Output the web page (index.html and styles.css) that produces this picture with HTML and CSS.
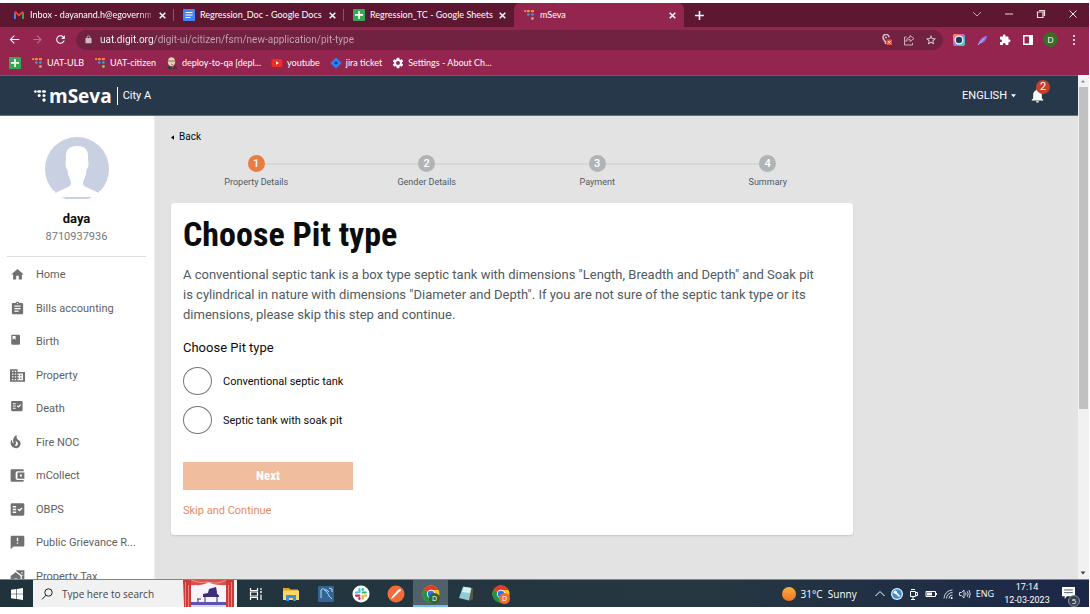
FILE: index.html
```html
<!DOCTYPE html>
<html lang="en">
<head>
<meta charset="utf-8">
<meta name="viewport" content="width=device-width, initial-scale=1">
<title>mSeva</title>
<link rel="stylesheet" href="styles.css">
</head>
<body>
<svg class="defs" aria-hidden="true">
  <symbol id="digit" viewBox="0 0 12 14"><g class="d-top"><circle cx="1.4" cy="2.6" r="1.3"/><rect x="3.2" y="1.2" width="4" height="2.6" rx="1.2"/><rect x="8" y="1.2" width="4" height="2.6" rx="1.2"/></g><g class="d-mid"><circle cx="5.2" cy="6.4" r="1.5"/><circle cx="10" cy="6.4" r="1.5"/></g><circle class="d-low" cx="10" cy="11" r="1.7"/></symbol>
  <symbol id="sheet" viewBox="0 0 12 12"><rect width="12" height="12" rx="1" fill="#34a853"/><path d="M5.2 2v3H2v1.7h3.2V10h1.7V6.700H10V5H6.900V2z" fill="#fff"/></symbol>
  <symbol id="close" viewBox="0 0 8 8"><path d="M1.500 1.500l5 5m0-5l-5 5" stroke="currentColor" stroke-width="1.300"/></symbol>
  <symbol id="check" viewBox="0 0 24 24"><path d="M20 3H4c-1.100 0-2 .9-2 2v14c0 1.100.9 2 2 2h16c1.100 0 2-.9 2-2V5c0-1.100-.9-2-2-2zM10 17H5v-2h5v2zm0-4H5v-2h5v2zm0-4H5V7h5v2zm4.820 6L12 12.160l1.410-1.410 1.410 1.420L17.990 9l1.420 1.420L14.820 15z"/></symbol>
  <symbol id="chrome" viewBox="0 0 18 18"><circle cx="9" cy="9" r="8.500" fill="#fbc116"/><path d="M9 9L1.600 4.700A8.500 8.500 0 0 1 16.400 5H9z" fill="#e33b2e"/><path d="M9 9L1.600 4.700A8.500 8.500 0 0 0 8.600 17.500L12.500 11z" fill="#229342"/><circle cx="9" cy="9" r="4.200" fill="#fff"/><circle cx="9" cy="9" r="3.300" fill="#2a74e8"/></symbol>
</svg>
<div class="desktop">
  <header class="browser">
    <div class="tabs">
      <div class="tab"><svg class="fav" viewBox="0 0 12 12"><path d="M1 10V3l2 1.500V10z" fill="#4285f4"/><path d="M11 10V3L9 4.500V10z" fill="#34a853"/><path d="M1 3.200L2.500 2 6 5l3.500-3L11 3.200 6 7.500z" fill="#ea4335"/></svg><span class="tab-title fade">Inbox - dayanand.h@egovernme</span><button class="x" aria-label="Close tab"><svg viewBox="0 0 8 8"><use href="#close"/></svg></button></div>
      <div class="tab"><svg class="fav" viewBox="0 0 12 12"><rect width="12" height="12" rx="1" fill="#4285f4"/><path d="M2.500 3.500h7M2.500 6h7M2.500 8.500h5" stroke="#fff" stroke-width="1.200"/></svg><span class="tab-title">Regression_Doc - Google Docs</span><button class="x" aria-label="Close tab"><svg viewBox="0 0 8 8"><use href="#close"/></svg></button></div>
      <div class="tab"><svg class="fav"><use href="#sheet"/></svg><span class="tab-title">Regression_TC - Google Sheets</span><button class="x" aria-label="Close tab"><svg viewBox="0 0 8 8"><use href="#close"/></svg></button></div>
      <div class="tab active"><svg class="fav color"><use href="#digit"/></svg><span class="tab-title">mSeva</span><button class="x" aria-label="Close tab"><svg viewBox="0 0 8 8"><use href="#close"/></svg></button></div>
      <button class="plus" aria-label="New tab"><svg viewBox="0 0 10 10"><path d="M5 1v8M1 5h8" stroke="#fff" stroke-width="1.500"/></svg></button>
      <div class="win">
        <button aria-label="Search tabs"><svg viewBox="0 0 10 10"><path d="M1 3l4 4 4-4" fill="none" stroke="#c8a3af"/></svg></button>
        <button aria-label="Minimize"><svg viewBox="0 0 10 10"><path d="M1 5h8" stroke="#f0d8c4"/></svg></button>
        <button aria-label="Restore"><svg viewBox="0 0 10 10"><path d="M1.500 3h5.500v5.500H1.500zM3 1.500h5.500V7" fill="none" stroke="#f0e0dd" stroke-width="1.200"/></svg></button>
        <button aria-label="Close"><svg viewBox="0 0 10 10"><path d="M1.500 1.500l7 7m0-7l-7 7" stroke="#f0e4e8"/></svg></button>
      </div>
    </div>
    <div class="toolbar">
      <button class="tool" aria-label="Back"><svg viewBox="0 0 24 24"><path d="M21 11H6.830l5.590-5.590L11 4l-8 8 8 8 1.410-1.410L6.830 13H21z"/></svg></button>
      <button class="tool dim" aria-label="Forward"><svg viewBox="0 0 24 24"><path d="M4 11h12.170l-5.590-5.590L12 4l8 8-8 8-1.410-1.410L16.170 13H4z"/></svg></button>
      <button class="tool" aria-label="Reload"><svg viewBox="0 0 24 24"><path d="M17.650 6.350C16.200 4.900 14.210 4 12 4c-4.420 0-7.990 3.580-7.990 8s3.570 8 7.990 8c3.730 0 6.840-2.550 7.730-6h-2.080c-.82 2.330-3.040 4-5.650 4-3.310 0-6-2.690-6-6s2.690-6 6-6c1.660 0 3.140.69 4.220 1.780L13 11h7V4l-2.350 2.350z"/></svg></button>
      <div class="omnibox">
        <svg class="lock" viewBox="0 0 24 24"><path d="M18 8h-1V6c0-2.760-2.240-5-5-5S7 3.240 7 6v2H4v14h16V8zM9 8V6c0-1.660 1.340-3 3-3s3 1.340 3 3v2z"/></svg>
        <input class="url" aria-label="Address" value="uat.digit.org/digit-ui/citizen/fsm/new-application/pit-type">
        <button aria-label="Location blocked"><svg viewBox="0 0 12 12"><path d="M4 7.500L2.500 5a3 3 0 1 1 5.500-1.500M4.500 7v3" fill="none" stroke="#d9c0ca" stroke-width="1.500"/><circle cx="5" cy="3.500" r="1" fill="#d9c0ca"/><rect x="5.500" y="5.500" width="5.500" height="5.500" fill="#e8503c"/><path d="M7 7l2.500 2.500m0-2.500L7 9.500" stroke="#fff" stroke-width=".9"/></svg></button>
        <button aria-label="Share"><svg viewBox="0 0 12 12"><path d="M3.500 3H1.500v8h8V9M7 1.500l4 3-4 3v-2c-2 0-3 .7-4 2 .2-2.500 1.700-4 4-4z" fill="none" stroke="#cfaebb"/></svg></button>
        <button aria-label="Bookmark"><svg viewBox="0 0 24 24"><path fill="#ead9e0" d="M22 9.240l-7.190-.62L12 2 9.190 8.630 2 9.240l5.460 4.730L5.820 21 12 17.270 18.180 21l-1.630-7.030L22 9.240zM12 15.400l-3.760 2.270 1-4.280-3.320-2.880 4.380-.38L12 6.100l1.710 4.040 4.380.38-3.320 2.880 1 4.280L12 15.400z"/></svg></button>
      </div>
      <div class="exts">
        <button aria-label="Camera extension"><svg viewBox="0 0 12 12"><defs><linearGradient id="rb" x2="1" y2="1"><stop stop-color="#fa4"/><stop offset=".35" stop-color="#e5a"/><stop offset=".65" stop-color="#4af"/><stop offset="1" stop-color="#5d8"/></linearGradient></defs><rect width="12" height="12" rx="2" fill="url(#rb)"/><circle cx="6" cy="6" r="4.500" fill="#fff"/><circle cx="6" cy="6" r="3.200" fill="#263b52"/></svg></button>
        <button aria-label="Feather extension"><svg viewBox="0 0 12 12"><path d="M2 11C3 6 6 3 11 1.500 10.500 6 8 9 3.500 9.500z" fill="#8d76dc"/><path d="M2 11l6-6.500" stroke="#ddd3ff" stroke-width=".7"/></svg></button>
        <button aria-label="Extensions"><svg viewBox="0 0 24 24"><path fill="#fff" d="M20.500 11H19V7c0-1.100-.9-2-2-2h-4V3.500C13 2.120 11.880 1 10.500 1S8 2.120 8 3.500V5H4c-1.100 0-1.990.9-1.990 2v3.800H3.500c1.490 0 2.700 1.210 2.700 2.700s-1.210 2.700-2.700 2.700H2V20c0 1.100.9 2 2 2h3.800v-1.500c0-1.490 1.210-2.700 2.700-2.700 1.490 0 2.700 1.210 2.700 2.700V22H17c1.100 0 2-.9 2-2v-4h1.500c1.380 0 2.500-1.120 2.500-2.500S21.880 11 20.500 11z"/></svg></button>
        <button aria-label="Side panel"><svg viewBox="0 0 12 12"><path d="M1 1h10v10H1zM2.500 2.500v7H7v-7z" fill="#fff" fill-rule="evenodd"/></svg></button>
        <button class="profile" aria-label="Profile">D</button>
        <button class="kebab" aria-label="Menu"><svg viewBox="0 0 12 12"><g fill="#fff"><circle cx="6" cy="2" r="1"/><circle cx="6" cy="6" r="1"/><circle cx="6" cy="10" r="1"/></g></svg></button>
      </div>
    </div>
    <nav class="bookmarks" aria-label="Bookmarks">
      <a href="#" aria-label="Sheets"><svg><use href="#sheet"/></svg></a>
      <a href="#"><svg class="color"><use href="#digit"/></svg>UAT-ULB</a>
      <a href="#"><svg class="color"><use href="#digit"/></svg>UAT-citizen</a>
      <a href="#"><svg viewBox="0 0 12 12"><path d="M1.500 12c0-3 2-4 5-4s4.500 1.500 4.500 4z" fill="#333b45"/><ellipse cx="5.500" cy="4.800" rx="3.700" ry="4.600" fill="#e9d3b4"/><path d="M2 4h7M5 7l2 1" stroke="#6e5541" stroke-width=".8"/><path d="M5 9l2 3 1-3z" fill="#c33"/></svg>deploy-to-qa [depl...</a>
      <a href="#"><svg viewBox="0 0 12 12"><rect x=".5" y="2" width="11" height="8" rx="2" fill="#f22b22"/><path d="M5 4.200v3.600L8 6z" fill="#fff"/></svg>youtube</a>
      <a href="#"><svg viewBox="0 0 12 12"><path d="M6 .5L11.500 6 6 11.500.5 6z" fill="#2684ff"/><path d="M6 4l2 2-2 2-2-2z" fill="#123f8f"/></svg>jira ticket</a>
      <a href="#"><svg viewBox="1 1 22 22"><path fill="#fff" d="M19.140 12.940c.04-.3.06-.61.06-.94 0-.32-.02-.64-.07-.94l2.030-1.580c.18-.14.23-.41.12-.61l-1.920-3.320c-.12-.22-.37-.29-.59-.22l-2.390.96c-.5-.38-1.030-.7-1.620-.94l-.36-2.540c-.04-.24-.24-.41-.48-.41h-3.840c-.24 0-.43.17-.47.41l-.36 2.540c-.59.24-1.130.57-1.620.94l-2.390-.96c-.22-.08-.47 0-.59.22L2.740 8.870c-.12.21-.08.47.12.61l2.030 1.580c-.05.3-.09.63-.09.94s.02.64.07.94l-2.030 1.580c-.18.14-.23.41-.12.61l1.920 3.320c.12.22.37.29.59.22l2.390-.96c.5.38 1.030.7 1.620.94l.36 2.540c.05.24.24.41.48.41h3.840c.24 0 .44-.17.47-.41l.36-2.540c.59-.24 1.130-.56 1.620-.94l2.390.96c.22.08.47 0 .59-.22l1.920-3.320c.12-.22.07-.47-.12-.61l-2.010-1.580zM12 15.600a3.600 3.600 0 1 1 0-7.200 3.600 3.600 0 0 1 0 7.200z"/></svg>Settings - About Ch...</a>
    </nav>
  </header>

  <div class="viewport">
    <div class="app">
      <header class="appbar">
        <div class="brand"><svg viewBox="0 0 12 14"><use href="#digit"/></svg><span class="wordmark">mSeva</span></div>
        <span class="city">City A</span>
        <button class="lang">ENGLISH<svg viewBox="0 0 6 4"><path d="M0 0h6L3 3.500z" fill="#fff"/></svg></button>
        <button class="bell" aria-label="Notifications"><svg viewBox="3 2 18 20"><path fill="#fff" d="M12 22c1.100 0 2-.9 2-2h-4c0 1.100.89 2 2 2zm6-6v-5c0-3.070-1.640-5.640-4.500-6.320V4c0-.83-.67-1.500-1.500-1.500s-1.500.67-1.500 1.500v.68C7.630 5.360 6 7.920 6 11v5l-2 2v1h16v-1l-2-2z"/></svg><span class="badge">2</span></button>
      </header>
      <div class="content">
        <aside class="sidebar">
          <div class="user">
            <svg class="avatar" viewBox="0 0 64 62"><circle cx="32" cy="32" r="32" fill="#c9d0e2"/><path d="M8 57l16-7.500c2-1 2.500-3 1.500-6-2-3.500-2.500-6-3-10.500-2-2-2.500-7-1.500-10C20 14 23 9 32 9s12 5 11 14c1 3 .5 8-1.500 10-.5 4.500-1 7-3 10.500-1 3-.5 5 1.500 6L56 57v3H8z" fill="#fff"/><path d="M0 54h10v6H0zM54 54h10v6H54z" fill="#fff"/></svg>
            <strong>daya</strong>
            <span>8710937936</span>
          </div>
          <nav class="menu" aria-label="Services">
            <a href="#"><svg viewBox="0 0 24 24"><path d="M10 20v-6h4v6h5v-8h3L12 3 2 12h3v8z"/></svg>Home</a>
            <a href="#"><svg viewBox="1 0 22 24"><path d="M19 3h-4.180C14.400 1.840 13.300 1 12 1c-1.300 0-2.400.84-2.820 2H5c-1.100 0-2 .9-2 2v14c0 1.100.9 2 2 2h14c1.100 0 2-.9 2-2V5c0-1.100-.9-2-2-2zm-7 0c.55 0 1 .45 1 1s-.45 1-1 1-1-.45-1-1 .45-1 1-1zm2 14H7v-2h7v2zm3-4H7v-2h10v2zm0-4H7V7h10v2z"/></svg>Bills accounting</a>
            <a href="#"><svg viewBox="0 0 24 24"><path d="M4 1h10q2 0 2 2v12q0 2-2 2H4q-2 0-2-2V3q0-2 2-2zm0 2v6l2.500-2L9 9V3z" fill-rule="evenodd"/></svg>Birth</a>
            <a href="#"><svg viewBox="1 1 22 22"><path d="M12 7V3H1v18h22V7H12zM6 19H4v-2h2v2zm0-4H4v-2h2v2zm0-4H4V9h2v2zm0-4H4V5h2v2zm4 12H8v-2h2v2zm0-4H8v-2h2v2zm0-4H8V9h2v2zm0-4H8V5h2v2zm10 12h-8v-2h2v-2h-2v-2h2v-2h-2V9h8v10zm-2-8h-2v2h2v-2zm0 4h-2v2h2v-2z"/></svg>Property</a>
            <a href="#"><svg viewBox="0 0 24 24"><use href="#check" x="0" y="-3" width="22" height="22"/></svg>Death</a>
            <a href="#"><svg viewBox="3 1 24 24"><path d="M19.480 12.350c-1.570-4.080-7.160-4.300-5.810-10.230.1-.44-.37-.78-.75-.55C9.290 3.710 6.680 8 8.870 13.620c.18.46-.36.89-.75.59-1.810-1.370-2-3.340-1.840-4.750.06-.52-.62-.77-.91-.34C4.690 10.160 4 11.840 4 14.370c.38 5.600 5.110 7.320 6.810 7.540 2.430.31 5.060-.14 6.950-1.870 2.080-1.930 2.840-5.010 1.720-7.690zm-9.280 5.030c1.440-.35 2.180-1.390 2.380-2.310.33-1.430-.96-2.830-.09-5.090.33 1.870 3.270 3.040 3.270 5.080.08 2.530-2.660 4.700-5.560 2.320z"/></svg>Fire NOC</a>
            <a href="#"><svg viewBox="0 0 24 24"><path d="M22 19v1q0 2-2 2H3q-2 0-2-2V4q0-2 2-2h17q2 0 2 2v1H12q-3 0-3 3v8q0 3 3 3zM12 17h11V7H12zm4-3.500v-3h3v3z" fill-rule="evenodd"/></svg>mCollect</a>
            <a href="#"><svg viewBox="1 2 22 20"><use href="#check" x="0" y="0" width="24" height="24"/></svg>OBPS</a>
            <a href="#"><svg viewBox="1 1 22 22"><path d="M20 2H4c-1.100 0-1.990.9-1.990 2L2 22l4-4h14c1.100 0 2-.9 2-2V4c0-1.100-.9-2-2-2zm-7 12h-2v-2h2v2zm0-4h-2V5h2v5z"/></svg>Public Grievance R...</a>
            <a href="#"><svg viewBox="0 0 24 24"><path d="M1 11l8-6 8 6v11h-5v-7H7v7H1zM10 2h13v20h-4V10l-9-6.500z"/><path d="M18 5h2v2h-2zM20 9h1v2h-1z" fill="#fff"/></svg>Property Tax</a>
          </nav>
        </aside>
        <main class="main">
          <a class="back" href="#"><svg viewBox="0 0 4 6"><path d="M4 0v6L0 3z"/></svg>Back</a>
          <ol class="steps">
            <li class="current"><b>1</b><span>Property Details</span></li>
            <li><b>2</b><span>Gender Details</span></li>
            <li><b>3</b><span>Payment</span></li>
            <li><b>4</b><span>Summary</span></li>
          </ol>
          <form class="card">
            <h1>Choose Pit type</h1>
            <p>A conventional septic tank is a box type septic tank with dimensions "Length, Breadth and Depth" and Soak pit is cylindrical in nature with dimensions "Diameter and Depth". If you are not sure of the septic tank type or its dimensions, please skip this step and continue.</p>
            <fieldset>
              <legend>Choose Pit type</legend>
              <label><input type="radio" name="pit">Conventional septic tank</label>
              <label><input type="radio" name="pit">Septic tank with soak pit</label>
            </fieldset>
            <button type="button" class="next">Next</button>
            <a class="skip" href="#">Skip and Continue</a>
          </form>
        </main>
      </div>
    </div>
    <div class="scroll" aria-hidden="true">
      <svg viewBox="0 0 10 12"><path d="M3 7.500h4L5 5z" fill="#8a8a8a"/></svg>
      <div class="track"><div class="thumb"></div></div>
      <svg viewBox="0 0 10 12"><path d="M2.500 4.500h5L5 7.500z" fill="#444"/></svg>
    </div>
  </div>

  <footer class="taskbar">
    <button class="start" aria-label="Start"><svg viewBox="0 0 12 12"><path d="M0 1.800L5.400 1v4.700H0zM6 .9L12 0v5.700H6zM0 6.300h5.400V11L0 10.200zM6 6.300h6V12l-6-.9z" fill="#fff"/></svg></button>
    <label class="search"><svg class="glass" viewBox="0 0 12 12"><circle cx="7.500" cy="4.500" r="3.700" fill="none" stroke="#222"/><path d="M5 7.200L1 11.400" stroke="#222"/></svg><input type="text" aria-label="Search" placeholder="Type here to search">
      <svg class="art" viewBox="0 0 51 27"><path d="M0 0h51v27H0z" fill="#f7f3fb"/><path d="M6 22h39v5H6z" fill="#5b55ad"/><path d="M6 25h39v2H6z" fill="#d9d4ef"/><path d="M20 14l5-1 1-4 7-2 1 5c-1 3 3 2 2 5H20z" fill="#3b2f78"/><path d="M22 16v6M34 16v6M14 19h4M15 19v3" stroke="#3b2f78"/><path d="M0 0h51v3Q44 6 38 5 30 5 25.500 2 20 6 13 5 8 6 0 4z" fill="#d8504a"/><path d="M8 0q9 4 17 2M43 0q-8 5-17 2" stroke="#f4958c" fill="none"/><path d="M0 0h8v27H1zM43 0h8v27h-8z" fill="#c93c3a"/><path d="M2.500 2v25M5.500 5v22M45.500 5v22M48.500 2v25" stroke="#ee8078"/></svg></label>
    <div class="apps">
      <button aria-label="Task view"><svg viewBox="0 0 18 18"><path d="M3.500 3v2.500h7V3M3.500 15v-2.500h7V15M3.500 7h7v4h-7zM14 3v2M14 9.500V15" fill="none" stroke="#fff" stroke-width="1.200"/><circle cx="14" cy="7" r="1" fill="#fff"/></svg></button>
      <button aria-label="File Explorer"><svg viewBox="0 0 18 18"><path d="M1 3h6l1.500 1.500H16V14H1z" fill="#e8a21f"/><path d="M1 5.500h16V15H1z" fill="#fbd764"/><path d="M4 16v-6h10v6h-3v-3H7v3z" fill="#3f8ddb"/></svg></button>
      <button aria-label="MySQL Workbench"><svg viewBox="0 0 18 18"><rect x="1" y="1" width="16" height="16" rx="1" fill="#326596"/><path d="M4 13V5q2-3 5 1t3 5l3 3M7 5q3-1 5 2M12 3l3 1v3" fill="none" stroke="#b8d9eb"/></svg></button>
      <button aria-label="Slack"><svg viewBox="0 0 18 18"><circle cx="9" cy="9" r="8.500" fill="#fff"/><g stroke-width="2.200" stroke-linecap="round"><path d="M7.500 4v3M4 7.500h1.500" stroke="#36c5f0"/><path d="M10.700 7.500h3M10.700 4v1" stroke="#2eb67d"/><path d="M10.700 10.700v3M13 10.700h1" stroke="#ecb22e"/><path d="M4 10.700h3.400M7.400 13v1" stroke="#e01e5a"/></g></svg></button>
      <button aria-label="Postman"><svg viewBox="0 0 18 18"><circle cx="9" cy="9" r="8.500" fill="#f26b3a"/><path d="M4 14l1.500-3 6-6.500Q14 3.500 14 5T12 7l-6 6z" fill="#fff"/></svg></button>
      <button class="running" aria-label="Chrome, D"><svg viewBox="0 0 18 18"><use href="#chrome"/></svg><span class="tag">D</span></button>
      <button aria-label="Notepad"><svg viewBox="0 0 18 18"><path d="M6 2l10 1v11l-3 2z" fill="#5c5443"/><path d="M6 1.500l8.500 1.500L12 15.500 2 13z" fill="#8fcbd6"/><path d="M7 2l7 1-1 5-8-1z" fill="#d8f0f1"/></svg></button>
      <button aria-label="Chrome, second profile"><svg viewBox="0 0 18 18"><use href="#chrome"/></svg><span class="tag orange">D</span></button>
    </div>
    <div class="tray">
      <span class="sun"></span><span class="weather">31°C&nbsp; Sunny</span>
      <svg viewBox="0 0 12 12"><path d="M1.500 8L6 3.500 10.500 8" fill="none" stroke="#fff"/></svg>
      <svg viewBox="0 0 12 12"><circle cx="6" cy="6" r="6" fill="#e8f3fb"/><circle cx="6" cy="6" r="4.800" fill="#3b8fd6"/><path d="M4 3.800l4.500 4.700" stroke="#fff" stroke-width="1.800"/><circle cx="4.300" cy="4.200" r="1.700" fill="#fff"/></svg>
      <svg viewBox="0 0 12 12"><path d="M2.500 3.500h5v5h-5zM3 1.500h4M5 8.500v3M3 11.500h4M7.500 4.500h2v3h-2" fill="none" stroke="#fff"/></svg>
      <svg viewBox="0 0 12 12"><path d="M1 3.500h9.500v5H1zM11.500 5v2" fill="none" stroke="#fff"/><path d="M2 4.500h5v3H2z" fill="#fff"/></svg>
      <svg viewBox="0 0 12 12"><path d="M2 10.500A8.500 8.500 0 0 1 10.500 2M4.500 10.500a6 6 0 0 1 6-6M7 10.500A3.500 3.500 0 0 1 10.500 7" fill="none" stroke="#ccd3dc"/><circle cx="9.700" cy="10" r="1" fill="#fff"/></svg>
      <svg viewBox="0 0 12 12"><path d="M.5 4.500h2L5 2v8L2.500 7.500h-2zM6.500 4.500q1 1.500 0 3M8.200 3.200q2 2.800 0 5.600M10 2q2.500 4 0 8" fill="none" stroke="#e2e6ec" stroke-width=".9"/></svg>
      <span class="eng">ENG</span>
      <time class="clock"><span>17:14</span><span>12-03-2023</span></time>
      <button class="notes" aria-label="Notifications"><svg viewBox="0 0 12 12"><path d="M0 0h12v8.500H4.500L2.500 11V8.500H0z" fill="#fff"/><path d="M2 2.700h8M2 5.200h8" stroke="#39465a" stroke-width=".8"/></svg><span class="count">5</span></button>
    </div>
  </footer>
</div>
</body>
</html>
```
FILE: styles.css
```css
* { box-sizing: border-box; }
body { margin: 0; background: #fff; font-family: Roboto, "Liberation Sans", sans-serif; }
a { color: inherit; text-decoration: none; }
button { border: 0; padding: 0; background: none; color: inherit; font: inherit; display: flex; align-items: center; justify-content: center; position: relative; }
svg { display: block; flex: none; }
.defs { display: none; }
.d-top { fill: var(--top, #fff); }
.d-mid { fill: var(--mid, #fff); }
.d-low { fill: var(--low, #fff); }
.color { --top: #f08a3c; --mid: #3e9be0; --low: #8bc34a; }

.desktop { display: flex; flex-direction: column; height: 100vh; padding: 3px 1px 7px 0; overflow: hidden; }

/* browser chrome */
.browser { font: 9px/12px Lato, "Open Sans", sans-serif; color: #fff; background: #94254e; flex: none; }
.tabs { display: flex; height: 24px; background: #5d1731; padding-left: 4px; }
.tab { display: flex; align-items: center; width: 170px; gap: 5px; padding: 0 6px 0 9px; position: relative; }
.tab:nth-child(-n+2)::after { content: ""; position: absolute; right: 0; top: 6px; width: 1px; height: 12px; background: #94536a; }
.tab.active { background: #94254e; border-radius: 6px 6px 0 0; }
.fav { width: 12px; height: 12px; }
.tab-title { flex: 1; min-width: 0; white-space: nowrap; }
.fade { mask-image: linear-gradient(90deg, #000 88%, #0006); }
.x { width: 12px; height: 12px; }
.x svg { width: 9px; height: 9px; }
.plus { width: 30px; }
.plus svg { width: 11px; height: 11px; }
.win { display: flex; margin-left: auto; }
.win button { width: 32px; height: 22px; }
.win svg { width: 10px; height: 10px; }

.toolbar { display: flex; align-items: center; height: 25px; padding: 0 4px 0 3px; }
.tool { width: 23px; height: 20px; fill: #fff; }
.tool svg { width: 13px; height: 13px; }
.dim { fill: #b9718b; }
.omnibox { display: flex; align-items: center; flex: 1; height: 20px; margin-left: 4px; border-radius: 10px; background: #712240; padding: 0 1px 0 8px; }
.omnibox button { width: 22px; height: 20px; }
.omnibox button svg { width: 12px; height: 12px; }
.lock { width: 9px; height: 9px; fill: #d3b7c2; margin-right: 7px; }
.url { flex: 1; min-width: 0; border: 0; padding: 0; outline: 0; font: 10px/14px Roboto, sans-serif; color: transparent; background: linear-gradient(90deg, #fff 54px, #c9a5b3 54px); background-clip: text; -webkit-background-clip: text; }
.exts { display: flex; align-items: center; margin-left: 4px; }
.exts button { width: 23px; height: 20px; }
.exts svg { width: 12px; height: 12px; }
.exts .profile { width: 15px; height: 15px; border-radius: 50%; background: #3c6a28; font-size: 8px; margin: 0 4px; }

.bookmarks { display: flex; align-items: center; gap: 10px; height: 23px; padding: 0 0 2px 9px; }
.bookmarks a { display: flex; align-items: center; gap: 4px; }
.bookmarks svg { width: 12px; height: 12px; }

/* page */
.viewport { display: flex; flex: 1; min-height: 0; }
.app { display: flex; flex-direction: column; flex: 1; min-width: 0; }
.appbar { display: flex; align-items: center; height: 41px; flex: none; padding: 0 34px; background: #28384b; color: #fff; border-top: 1px solid #62606e; border-bottom: 1px solid #657180; }
.brand { display: flex; align-items: center; gap: 3px; padding-right: 5px; border-right: 1px solid #fff; height: 18px; }
.brand svg { width: 12px; height: 14px; }
.wordmark { font: 700 19px/18px "Open Sans", sans-serif; }
.city { font-size: 11px; margin-left: 5px; }
.lang { margin-left: auto; font-size: 11px; gap: 4px; }
.lang svg { width: 5px; height: 4px; }
.bell { width: 14px; height: 16px; margin-left: 14px; }
.bell svg { width: 13px; height: 15px; }
.badge { position: absolute; left: 6px; top: -8px; width: 14px; height: 14px; border-radius: 50%; background: #c8402c; font-size: 11px; line-height: 14px; }

.content { display: flex; flex: 1; min-height: 0; background: #e3e3e3; }
.sidebar { width: 155px; flex: none; background: #fff; overflow: hidden; border-right: 1px solid #eee; }
.user { display: flex; flex-direction: column; align-items: center; margin: 0 8px 0 7px; padding-top: 21px; height: 141px; border-bottom: 1px solid #ddd; font-size: 11px; line-height: 18px; color: #77787a; }
.user strong { font-size: 13px; color: #0b0c0c; margin-top: 11px; }
.avatar { width: 64px; height: 62px; }
.menu { display: grid; grid-template-rows: repeat(10, 1fr); height: 336px; padding-top: 1px; font-size: 11px; color: #5f6062; }
.menu a { display: flex; align-items: center; gap: 11px; padding-left: 10px; }
.menu svg { width: 15px; height: 15px; fill: #6f7072; }

.main { flex: 1; min-width: 0; padding: 14px 16px 0; }
.back { display: flex; align-items: center; gap: 5px; font-size: 10px; line-height: 14px; color: #0b0c0c; }
.back svg { width: 3px; height: 5px; }
.steps { display: grid; grid-template-columns: repeat(4, 1fr); max-width: 682px; margin: 11px 0 14px; padding: 0; list-style: none; }
.steps li { display: flex; flex-direction: column; align-items: center; gap: 3px; font-size: 9px; line-height: 14px; color: #505a5f; position: relative; }
.steps b { width: 17px; height: 17px; border-radius: 50%; background: #b1b4b6; color: #fff; font-size: 11px; line-height: 17px; text-align: center; font-weight: 500; z-index: 1; }
.steps .current b { background: #e87c42; }
.steps li + li::before { content: ""; position: absolute; top: 8px; right: 50%; width: 100%; height: 2px; background: #d6d7d7; }
.card { max-width: 682px; min-height: 332px; background: #fff; border-radius: 3px; padding: 10px 12px; box-shadow: 0 1px 2px #0002; }
h1 { margin: 0 0 10px; font: 700 34px/42px "Roboto Condensed", "Liberation Sans Narrow", sans-serif; color: #0b0c0c; }
.card p { margin: 0 0 13px; padding-right: 20px; font-size: 13px; line-height: 20px; color: #505a5f; }
fieldset { border: 0; margin: 0; padding: 0; }
legend { padding: 0; font-size: 13px; line-height: 20px; color: #0b0c0c; margin-bottom: 9px; }
fieldset label { display: flex; align-items: center; gap: 11px; font-size: 11px; color: #0b0c0c; margin-bottom: 11px; }
fieldset input { appearance: none; width: 29px; height: 28px; margin: 0; border: 1px solid #777; border-radius: 50%; }
.next { width: 170px; height: 28px; margin-top: 17px; background: #f0bd9f; color: #fff; font: 700 13px/28px "Roboto Condensed", "Liberation Sans Narrow", sans-serif; }
.skip { display: block; width: max-content; margin-top: 13px; font-size: 11px; line-height: 16px; color: #e88b5c; }

.scroll { display: flex; flex-direction: column; width: 11px; flex: none; background: #f1f1f1; padding-right: 1px; }
.scroll svg { height: 12px; width: 10px; }
.track { flex: 1; }
.thumb { height: 67%; background: #c1c1c1; margin-left: 1px; }

/* taskbar */
.taskbar { display: flex; height: 28px; flex: none; background: linear-gradient(90deg, #20333c, #263741 65%, #1c2748); border-top: 1px solid #7b868b; color: #fff; font: 10px/12px "Open Sans", "Noto Sans", sans-serif; }
.start { width: 33px; }
.start svg { width: 12px; height: 12px; }
.search { display: flex; align-items: center; width: 204px; background: #f1f1f1; padding: 0 3px 0 8px; }
.glass { width: 12px; height: 12px; margin-right: 9px; }
.search input { flex: 1; min-width: 0; border: 0; padding: 0; background: none; font: inherit; }
.search input::placeholder { color: #444; }
.art { width: 51px; height: 27px; }
.apps { display: flex; padding-left: 1px; }
.apps button { width: 35px; }
.apps svg { width: 18px; height: 18px; }
.apps .running { background: #51616b; box-shadow: inset 0 -2px #76b9ed; }
.tag { position: absolute; right: 8px; bottom: 3px; width: 11px; height: 11px; border-radius: 50%; background: #35662b; font-size: 7px; line-height: 11px; }
.orange { background: #ef6c33; }
.tray { display: flex; align-items: center; gap: 5px; margin-left: auto; padding-right: 13px; }
.tray svg { width: 12px; height: 12px; }
.sun { width: 14px; height: 14px; border-radius: 50%; background: linear-gradient(#f7b13c, #ee7329); }
.weather { margin-right: 12px; }
.eng { font-size: 9px; }
.clock { display: flex; flex-direction: column; align-items: center; font: 9px/13px Roboto, sans-serif; white-space: nowrap; width: 48px; margin: 0 4px; }
.notes { width: 16px; height: 20px; }
.notes svg { width: 13px; height: 13px; }
.count { position: absolute; right: -4px; bottom: -3px; width: 12px; height: 12px; border-radius: 50%; background: #3a3f4c; border: 1px solid #8b92a0; font-size: 8px; line-height: 10px; }
```
